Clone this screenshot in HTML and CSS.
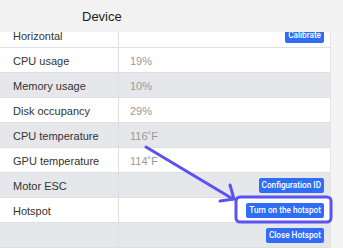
FILE: index.html
```html
<!DOCTYPE html>
<html lang="en">
<head>
    <meta charset="UTF-8">
    <meta name="viewport" content="width=device-width, initial-scale=1.0">
    <title>Device</title>
    <link rel="stylesheet" href="styles.css">
</head>
<body>
    <div class="page">
        <!-- header -->
        <div class="header">
            <h1 class="header-title">Device</h1>
        </div>

        <div class="main">
            <div class="table-wrap">
                <div class="table">
                    <div class="row">
                        <div class="cell-name">Horizontal</div>
                        <div class="cell-value"><button class="btn">Calibrate</button></div>
                    </div>
                    <div class="row">
                        <div class="cell-name">CPU usage</div>
                        <div class="cell-value">19%</div>
                    </div>
                    <div class="row gray">
                        <div class="cell-name">Memory usage</div>
                        <div class="cell-value">10%</div>
                    </div>
                    <div class="row">
                        <div class="cell-name">Disk occupancy</div>
                        <div class="cell-value">29%</div>
                    </div>
                    <div class="row gray">
                        <div class="cell-name">CPU temperature</div>
                        <div class="cell-value">116˚F</div>
                    </div>
                    <div class="row">
                        <div class="cell-name">GPU temperature</div>
                        <div class="cell-value">114˚F</div>
                    </div>
                    <div class="row gray">
                        <div class="cell-name">Motor ESC</div>
                        <div class="cell-value"><button class="btn">Configuration ID</button></div>
                    </div>
                    <div class="row">
                        <div class="cell-name">Hotspot</div>
                        <div class="cell-value"><button class="btn">Turn on the hotspot</button></div>
                    </div>
                    <div class="row gray">
                        <div class="cell-name"></div>
                        <div class="cell-value"><button class="btn">Close Hotspot</button></div>
                    </div>
                </div>
            </div>
            <div class="side"></div>
        </div>

        <!-- annotation -->
        <svg class="annotation" width="343" height="248" viewBox="0 0 343 248">
            <g fill="none" stroke="#5a52f1" stroke-width="3" stroke-linecap="round" stroke-linejoin="round">
                <path d="M146 147 L233 199"/>
                <path d="M230 185 L234 199 L220 201"/>
                <rect x="236" y="197" width="95" height="25" rx="4"/>
            </g>
        </svg>
    </div>
</body>
</html>
```

FILE: styles.css
```css
* {
    margin: 0;
    padding: 0;
    box-sizing: border-box;
    font-family: "Liberation Sans", Arial, sans-serif;
}

body {
    background-color: #f4f4f5;
}

.page {
    position: relative;
    width: 343px;
    height: 248px;
    overflow: hidden;
}

/* header */
.header {
    position: relative;
    z-index: 1;
    height: 32px;
    background-color: #f2f2f3;
    display: flex;
    align-items: center;
    padding-left: 82px;
}

.header-title {
    font-size: 13px;
    font-weight: normal;
    color: #222;
}

/* table */
.main {
    display: flex;
    height: 216px;
}

.table-wrap {
    width: 331px;
    height: 216px;
    overflow: hidden;
    background-color: #fff;
    border-right: 1px solid #e4e4e6;
}

.table {
    margin-top: -9px;
}

.row {
    display: grid;
    grid-template-columns: 119px 1fr;
    height: 25px;
    border-bottom: 1px solid #dedfe2;
    background-color: #fff;
}

.row.gray {
    background-color: #e6e7eb;
}

.cell-name {
    display: flex;
    align-items: center;
    padding: 1px 0 0 13px;
    font-size: 11px;
    color: #333;
    border-right: 1px solid #dedfe2;
}

.cell-value {
    display: flex;
    align-items: center;
    padding: 1px 6px 0 11px;
    font-size: 11px;
    color: #999;
}

.cell-value .btn {
    margin-left: auto;
}

.btn {
    height: 15px;
    padding: 0 3px;
    border: none;
    border-radius: 2px;
    background-color: #2f6df6;
    color: #fff;
    font-family: Roboto, "Liberation Sans", sans-serif;
    font-size: 8.2px;
    font-weight: 500;
    line-height: 15px;
}

.side {
    flex: 1;
    background-color: #f4f4f5;
}

/* annotation overlay */
.annotation {
    position: absolute;
    left: 0;
    top: 0;
    z-index: 2;
}
```
